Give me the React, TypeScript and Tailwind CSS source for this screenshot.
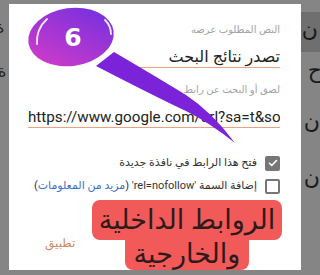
import React from 'react';

const FONT = { fontFamily: 'Roboto, "DejaVu Sans", sans-serif' };

function Backdrop() {
  // the page behind the dimmed overlay, only its edges peek out
  return (
    <div className="absolute inset-0 bg-[#858585]">
      <div className="absolute right-0 top-[12px] h-[40px] w-[19px] bg-[#6f6f6f]" />
      <span className="absolute right-[2px] top-[18px] text-[22px] leading-none text-[#1a1a1a]" style={FONT}>ن</span>
      <span className="absolute right-[-2px] top-[60px] text-[22px] leading-none text-[#1a1a1a]" style={FONT}>ح</span>
      <span className="absolute right-[0px] top-[110px] text-[22px] leading-none text-[#1a1a1a]" style={FONT}>ن</span>
      <span className="absolute right-[0px] top-[166px] text-[22px] leading-none text-[#1a1a1a]" style={FONT}>ن</span>
      <span className="absolute left-[-4px] top-[20px] text-[16px] leading-none text-[#222]" style={FONT}>ة</span>
      <span className="absolute left-[-6px] top-[64px] text-[16px] leading-none text-[#222]" style={FONT}>:ة</span>
    </div>
  );
}

function Field({ label, value, ltr }: { label: string; value: string; ltr?: boolean }) {
  return (
    <div className="flex flex-col">
      <div className="text-[10px] leading-[14px] text-[#a3a3a3]">{label}</div>
      <div
        dir={ltr ? 'ltr' : 'rtl'}
        className={`mt-[10px] overflow-hidden whitespace-nowrap border-b border-[#eaa27f] leading-[20px] text-[#212121] ${
          ltr ? 'text-[15.2px]' : 'text-[16px]'
        }`}
      >
        {value}
      </div>
    </div>
  );
}

function Check({ checked }: { checked?: boolean }) {
  if (checked) {
    return (
      <span className="flex h-[15px] w-[15px] shrink-0 items-center justify-center rounded-[2px] bg-[#767676]">
        <svg width="12" height="12" viewBox="0 0 24 24" fill="none" stroke="white" strokeWidth="3.2" strokeLinecap="round" strokeLinejoin="round">
          <path d="M5 12.5l4.5 4.5L19 7" />
        </svg>
      </span>
    );
  }
  return <span className="h-[15px] w-[15px] shrink-0 rounded-[2px] border-2 border-[#767676] bg-white" />;
}

function Dialog() {
  return (
    <div dir="rtl" className="relative ml-[9px] mt-[4px] h-[266px] w-[292px] bg-white pl-[19px] pr-[21px] pt-[19px]" style={FONT}>
      <Field label="النص المطلوب عرضه" value="تصدر نتائج البحث" />
      <div className="mt-[15px]">
        <Field label="لصق أو البحث عن رابط" value="https://www.google.com/url?sa=t&source=web" ltr />
      </div>

      <div className="mt-[26px] flex h-[18px] items-center gap-[8px] text-[11px] text-[#333]">
        <Check checked />
        <span>فتح هذا الرابط في نافذة جديدة</span>
      </div>
      <div className="mt-[5px] flex h-[18px] items-center gap-[8px] whitespace-nowrap text-[11px] text-[#333]">
        <Check />
        <span>
          إضافة السمة 'rel=nofollow' <span className="text-[#2b2b60]">(</span>
          <span className="text-[#3d6fc4]">مزيد من المعلومات</span>
          <span className="text-[#2b2b60]">)</span>
        </span>
      </div>

      <div className="mt-[40px] flex justify-end pl-[17px]">
        <span className="text-[12px] leading-[16px] text-[#d08a62]">تطبيق</span>
      </div>
    </div>
  );
}

function Bubble() {
  return (
    <svg className="pointer-events-none absolute left-0 top-0" width="320" height="275" viewBox="0 0 320 275">
      <defs>
        <linearGradient id="bub" x1="0" y1="1" x2="1" y2="0">
          <stop offset="0" stopColor="#d83cc6" />
          <stop offset="1" stopColor="#6c2fe2" />
        </linearGradient>
      </defs>
      <rect x="20" y="58" width="115" height="12" fill="white" />
      <path d="M114 52 Q160 79 186 95 Q212 112 235 143 Q210 123 186 111 Q160 99 96 66 Z" fill="#7a23d8" />
      <ellipse cx="71" cy="37" rx="43" ry="29" transform="rotate(-8 71 37)" fill="url(#bub)" />
      <path d="M37 44 Q36 29 47 19" stroke="white" strokeWidth="1.8" fill="none" strokeLinecap="round" opacity="0.9" />
      <path d="M105 20 Q111 26 111 34" stroke="white" strokeWidth="1.8" fill="none" strokeLinecap="round" opacity="0.9" />
      <text x="73" y="46" textAnchor="middle" fill="white" fontSize="25" fontWeight="900" fontFamily='"DejaVu Sans", sans-serif'>
        6
      </text>
    </svg>
  );
}

function Tag() {
  return (
    <div dir="rtl" className="absolute left-[92px] top-[200px] flex w-[190px] flex-col items-center text-[#2d1b1b]" style={FONT}>
      <span className="w-full rounded-[8px] bg-[#f25959] text-center text-[27px] leading-[40px]">الروابط الداخلية</span>
      <span className="-mt-[2px] rounded-b-[8px] bg-[#f25959] px-[9px] text-center text-[27px] leading-[32px]">والخارجية</span>
    </div>
  );
}

export default function App() {
  return (
    <div className="relative h-[275px] w-[320px] overflow-hidden">
      <Backdrop />
      <div className="relative">
        <Dialog />
      </div>
      <Bubble />
      <Tag />
    </div>
  );
}
